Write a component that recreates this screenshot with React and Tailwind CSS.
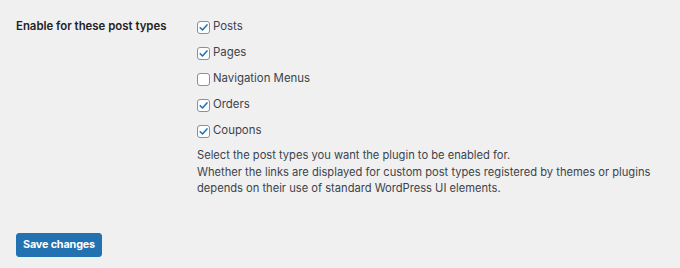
import React from 'react';

const postTypes = [
  { label: 'Posts', checked: true },
  { label: 'Pages', checked: true },
  { label: 'Navigation Menus', checked: false },
  { label: 'Orders', checked: true },
  { label: 'Coupons', checked: true },
];

const Checkbox = ({ checked }) => (
  <span className="w-[13px] h-[13px] rounded-[3px] border border-[#8c8f94] bg-white flex items-center justify-center shrink-0">
    {checked && (
      <svg viewBox="0 0 12 12" className="w-[11px] h-[11px]">
        <path d="M2.4 6.2 L4.9 8.7 L9.8 3.2" fill="none" stroke="#2271b1" strokeWidth="1.7" strokeLinecap="round" strokeLinejoin="round" />
      </svg>
    )}
  </span>
);

const App = () => {
  return (
    <div
      className="w-[680px] h-[268px] bg-[#f0f0f1] text-[#1d2327] overflow-hidden"
      style={{ fontFamily: 'Inter, "Liberation Sans", sans-serif' }}
    >
      {/* Settings row */}
      <div className="flex pl-4 pt-[14px]">
        <div className="w-[181px] h-[26px] flex items-center text-[11.4px] font-semibold">
          Enable for these post types
        </div>
        <div>
          {postTypes.map((type) => (
            <label key={type.label} className="h-[26px] flex items-center gap-[3px] text-[11.4px] text-[#3c434a]">
              <Checkbox checked={type.checked} />
              <span>{type.label}</span>
            </label>
          ))}
          <p className="mt-[3px] text-[11.15px] leading-[16.5px] text-[#3c434a]">
            Select the post types you want the plugin to be enabled for.
            <br />
            Whether the links are displayed for custom post types registered by themes or plugins
            <br />
            depends on their use of standard WordPress UI elements.
          </p>
        </div>
      </div>

      {/* Submit */}
      <div className="pl-4 mt-[33px]">
        <button className="h-[24px] w-[86px] rounded-[3px] bg-[#2271b1] border border-[#2271b1] text-white text-[10.8px] font-bold tracking-[-0.15px]">
          Save changes
        </button>
      </div>
    </div>
  );
};

export default App;
